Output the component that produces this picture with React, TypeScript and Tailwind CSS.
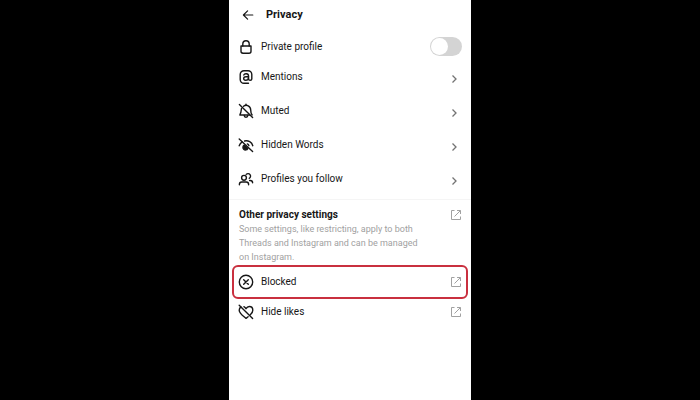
import type { ReactNode } from 'react';

const iconProps = {
  viewBox: '0 0 16 16',
  fill: 'none',
  stroke: 'currentColor',
  strokeWidth: 1.4,
  strokeLinecap: 'round' as const,
  strokeLinejoin: 'round' as const,
  'aria-hidden': true,
  className: 'w-4 h-4 shrink-0'
};

function BackIcon() {
  return (
    <svg {...iconProps} strokeWidth={1.2}>
      <path d="M12.8 8H3.4M7.6 3.8L3.4 8l4.2 4.2" />
    </svg>
  );
}

function LockIcon() {
  return (
    <svg {...iconProps}>
      <path d="M3 7h10v5.2a2 2 0 0 1-2 2H5a2 2 0 0 1-2-2z" />
      <path d="M4.8 7V5a3.2 3.2 0 0 1 6.4 0v2" />
    </svg>
  );
}

function MentionIcon() {
  return (
    <svg {...iconProps}>
      <path d="M10.5 14.3H6A3.8 3.8 0 0 1 2.2 10.5v-5A3.8 3.8 0 0 1 6 1.700h4a3.800 3.800 0 0 1 3.800 3.800V10c0 1.700-3.300 1.700-3.300 0V6.800c0-2.500-4-2.700-4.700-.8" />
      <path d="M10.500 7.700H8c-3 0-3 3.500-.4 3.500 1.700 0 2.900-.8 2.900-2.200" />
    </svg>
  );
}

function MutedIcon() {
  return (
    <svg {...iconProps}>
      <path d="M5.500 3.300C8.500 1 12.700 3 12.700 7c0 2.200.4 3.600 1.400 5M3.500 5.500C3.200 8.500 2.900 10.200 1.800 12h10" />
      <path d="M6.200 12.500a1.800 1.800 0 0 0 3.600 0M8 1.300v1M1.400 1.600l13.200 12.800" />
    </svg>
  );
}

function HiddenIcon() {
  return (
    <svg {...iconProps}>
      <path d="M1.2 8.800C1.800 7.100 2.800 5.700 4.200 4.900M6.600 4c3.700-.8 7.200 1.100 8.200 4.700" />
      <path d="M6.200 8.100a2.600 2.600 0 1 0 3.600 3.500z" fill="currentColor" />
      <path d="M9.300 6.900c.8.300 1.400.9 1.600 1.700M1.200 1.900l13.400 12.600" />
    </svg>
  );
}

function ProfilesIcon() {
  return (
    <svg {...iconProps}>
      <circle cx="6" cy="6.8" r="2.4" />
      <path d="M1.400 13.800v-.5c0-1.400 1-2.300 2.300-2.300h4.600c1.300 0 2.300.9 2.300 2.300v.5" />
      <path d="M8.200 3.400a2.500 2.500 0 1 1 3 3.900M11.600 9.500h.7c1.400 0 2.300.9 2.300 2.300" />
    </svg>
  );
}

function BlockedIcon() {
  return (
    <svg {...iconProps}>
      <circle cx="8" cy="8" r="6.7" />
      <path d="M5.7 5.7l4.600 4.600M10.300 5.700l-4.600 4.600" />
    </svg>
  );
}

function HideLikesIcon() {
  return (
    <svg {...iconProps}>
      <path d="M5.900 2.700c.9.400 1.600 1.100 2.100 2 .8-1.400 1.900-2.200 3.300-2.200 2 0 3.500 1.600 3.500 3.700 0 1.800-1 3.200-2.500 4.600M3.100 3C1.900 3.600 1.200 4.800 1.200 6.200c0 3 2.900 4.900 6.800 8.200l2.100-1.700" />
      <path d="M1.200 1.300l13.400 13.200" />
    </svg>
  );
}

function ExternalIcon() {
  return (
    <svg
      viewBox="0 0 12 12"
      fill="none"
      stroke="currentColor"
      aria-hidden
      className="w-3 h-3 shrink-0 text-neutral-400"
    >
      <path d="M4.5 1.5h-3v9h9v-3M7 1.5h3.500V5M10.300 1.700L4.500 7.500" />
    </svg>
  );
}

function ChevronIcon() {
  return (
    <svg
      viewBox="0 0 12 12"
      fill="none"
      stroke="currentColor"
      strokeWidth="1.3"
      aria-hidden
      className="w-3 h-3 mt-1 mr-0.5 shrink-0 text-neutral-500"
    >
      <path d="M4.5 2.500L8 6 4.500 9.500" />
    </svg>
  );
}

function Row({ icon, label, end }: { icon: ReactNode; label: string; end: ReactNode }) {
  return (
    <a href="#" className="flex h-full items-center gap-[7px]">
      {icon}
      <span className="flex-1">{label}</span>
      {end}
    </a>
  );
}

export default function App() {
  const items = [
    { label: 'Mentions', icon: <MentionIcon /> },
    { label: 'Muted', icon: <MutedIcon /> },
    { label: 'Hidden Words', icon: <HiddenIcon /> },
    { label: 'Profiles you follow', icon: <ProfilesIcon /> }
  ];

  return (
    <div className="min-h-screen bg-black font-['Roboto',sans-serif] text-[10px] leading-[14px] text-neutral-900">
      <main className="mx-auto min-h-screen w-full max-w-[242px] bg-white">
        <header className="flex h-[29px] items-center gap-2.5 px-[11px]">
          <button type="button" aria-label="Back">
            <BackIcon />
          </button>
          <h1 className="text-[11px] font-bold">Privacy</h1>
        </header>

        <div className="mt-1 flex h-[27px] items-center gap-[7px] px-[9px]">
          <LockIcon />
          <label htmlFor="private-profile" className="flex-1">Private profile</label>
          <input
            id="private-profile"
            type="checkbox"
            role="switch"
            className="h-[19px] w-8 appearance-none rounded-full bg-neutral-300 p-px before:block before:h-[17px] before:w-[17px] before:rounded-full before:bg-white checked:bg-neutral-900 checked:before:ml-auto"
          />
        </div>

        <ul>
          {items.map((item) => (
            <li key={item.label} className="h-[34px] px-[9px]">
              <Row icon={item.icon} label={item.label} end={<ChevronIcon />} />
            </li>
          ))}
        </ul>

        <section className="mt-[3px] border-t border-neutral-100 pt-2">
          <a href="#" className="flex items-center justify-between pl-2.5 pr-[9px]">
            <h2 className="font-bold">Other privacy settings</h2>
            <ExternalIcon />
          </a>
          <p className="pl-2.5 pr-11 text-[9px] leading-[14px] text-neutral-400">
            Some settings, like restricting, apply to both Threads and Instagram and can be managed on Instagram.
          </p>
          <ul className="mt-px">
            <li className="mx-[3px] h-[34px] rounded-md border-2 border-[#c9303f] px-1">
              <Row icon={<BlockedIcon />} label="Blocked" end={<ExternalIcon />} />
            </li>
            <li className="h-[26px] px-[9px]">
              <Row icon={<HideLikesIcon />} label="Hide likes" end={<ExternalIcon />} />
            </li>
          </ul>
        </section>
      </main>
    </div>
  );
}
